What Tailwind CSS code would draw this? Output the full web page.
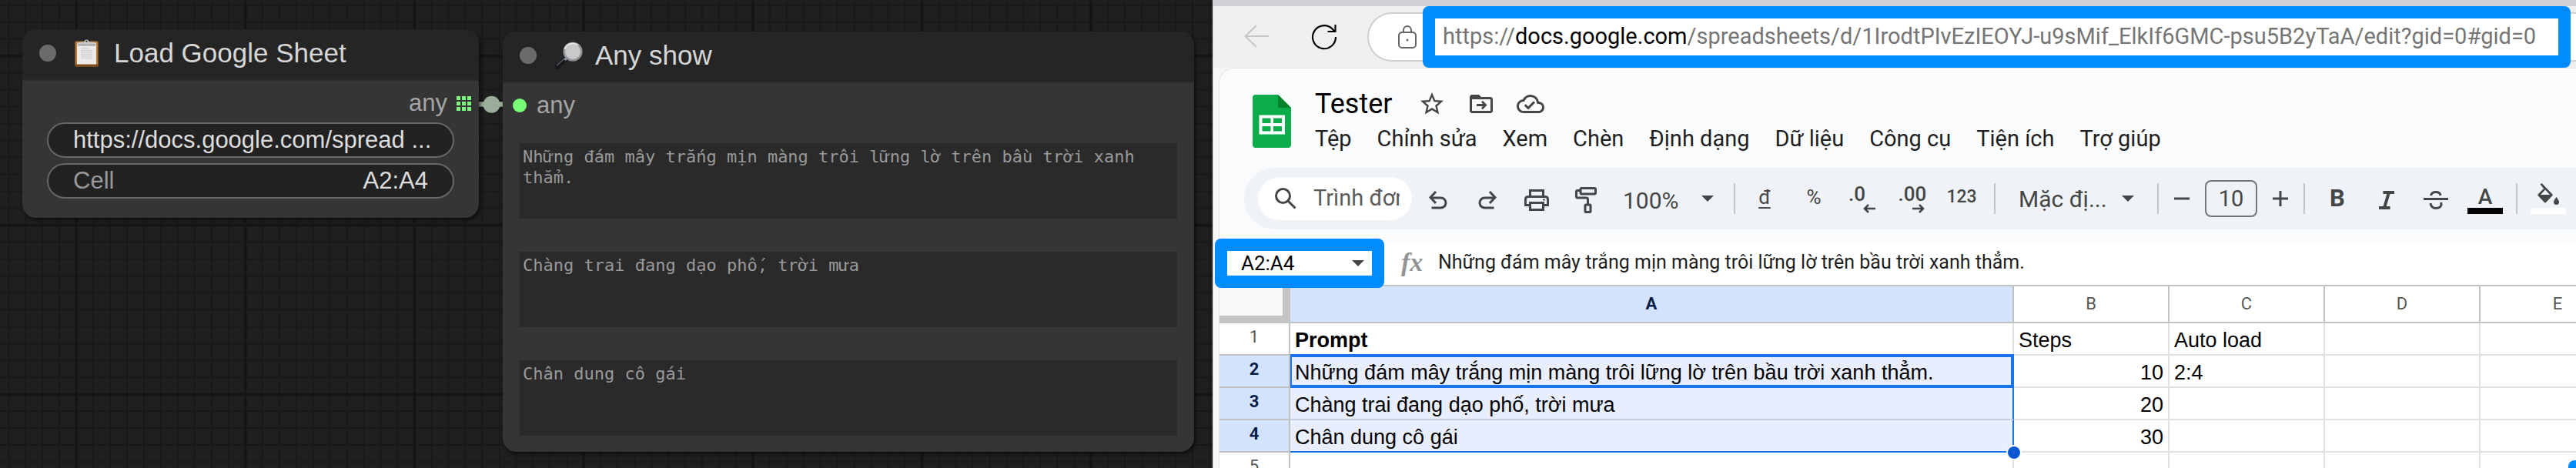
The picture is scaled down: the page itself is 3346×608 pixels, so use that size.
<!DOCTYPE html>
<html lang="vi">
<head>
<meta charset="utf-8">
<meta name="viewport" content="width=device-width, initial-scale=1">
<title>Load Google Sheet</title>
<script src="https://cdn.jsdelivr.net/npm/@tailwindcss/browser@4"></script>
</head>
<body class="grid h-screen grid-cols-[1575fr_1771fr] overflow-hidden bg-[#1f1f1f] font-['Liberation_Sans',Arial,sans-serif]">

<!-- Node canvas -->
<main class="relative overflow-hidden bg-[#1f1f1f]">
  <svg class="absolute inset-0 h-full w-full" aria-hidden="true">
    <defs>
      <pattern id="minor" width="21.97" height="21.97" x="10.2" y="5.8" patternUnits="userSpaceOnUse">
        <path d="M0 1H22M1 0V22" stroke="#191919" stroke-width="2"/>
      </pattern>
      <pattern id="major" width="219.7" height="219.7" x="97" y="71" patternUnits="userSpaceOnUse">
        <path d="M0 2H220M2 0V220" stroke="#141414" stroke-width="3.5"/>
      </pattern>
    </defs>
    <rect width="100%" height="100%" fill="url(#minor)"/>
    <rect width="100%" height="100%" fill="url(#major)"/>
    <path d="M620 135.5H656" stroke="#141414" stroke-width="12"/>
    <path d="M620 135.5H656" stroke="#9aac9a" stroke-width="6.5"/>
    <circle cx="638.500" cy="135.700" r="11" fill="#9aac9a"/>
  </svg>

  <section class="absolute top-[38px] left-[29px] w-[593px] overflow-hidden rounded-[18px] bg-[#353535] pb-[25px] shadow-[2px_3px_5px_rgba(0,0,0,0.6)]">
    <header class="flex h-[67px] items-center border-b-2 border-[#2b2b2b] bg-[#252525] pb-1 pl-[22px]">
      <span class="size-[22px] rounded-full bg-[#6b6b6b]"></span>
      <svg class="ml-6 h-9 w-[31px]" viewBox="0 0 31 36" aria-hidden="true">
        <rect x=".5" y="2.500" width="30" height="33" rx="1.500" fill="#b67a35"/>
        <rect x=".5" y="32.500" width="30" height="3" rx="1" fill="#7d4a1c"/>
        <rect x="3" y="6" width="25" height="26.500" fill="#ecebe9"/>
        <path d="M8 12H19M8 14.500H23M8 17H23M8 19.500H23M8 22H23M8 24.500H23" stroke="#d3d2d1" stroke-width="1.500"/>
        <path d="M3 6.800V4.800Q4 3.800 12.500 3.500Q12.500 .5 15.500 .5T18.500 3.500Q27 3.800 28 4.800V6.800Z" fill="#c9cbcf"/>
        <path d="M4 7.500H27" stroke="#65676b" stroke-width="1"/>
        <circle cx="15.500" cy="2.800" r="1.200" fill="#444"/>
      </svg>
      <h2 class="ml-5 text-[35px] leading-10 text-[#d6d6d6]">Load Google Sheet</h2>
    </header>
    <div class="mt-3 flex h-[34px] items-center justify-end gap-3 pr-[10px] text-[31px] text-[#a5a5a5]">
      any
      <svg class="size-[19px]" viewBox="0 0 19 19" fill="#7dfb7d" aria-hidden="true">
        <path d="M0 0h5v5H0zM7 0h5v5H7zM14 0h5v5h-5zM0 7h5v5H0zM7 7h5v5H7zM14 7h5v5h-5zM0 14h5v5H0zM7 14h5v5H7zM14 14h5v5h-5z"/>
      </svg>
    </div>
    <div class="mt-2 flex flex-col gap-[7px] px-8 text-[31px]">
      <input aria-label="URL" class="h-[46px] w-full rounded-full border-2 border-[#666] bg-[#222] pl-8 text-[#dddddd]" value="https://docs.google.com/spread ...">
      <label class="flex h-[46px] items-center rounded-full border-2 border-[#666] bg-[#222] px-8 text-[#999]">
        Cell
        <input class="min-w-0 flex-1 bg-transparent text-right text-[#dddddd]" value="A2:A4">
      </label>
    </div>
  </section>

  <section class="absolute top-[41px] left-[653px] w-[898px] overflow-hidden rounded-[18px] bg-[#353535] pb-[21px] shadow-[2px_3px_5px_rgba(0,0,0,0.6)]">
    <header class="flex h-[67px] items-center border-b-2 border-[#2b2b2b] bg-[#252525] pb-1 pl-[22px]">
      <span class="size-[22px] rounded-full bg-[#6b6b6b]"></span>
      <svg class="ml-6 size-9" viewBox="0 0 36 36" aria-hidden="true">
        <path d="M2.500 33.500L14 22.500" stroke="#17191c" stroke-width="6" stroke-linecap="round"/>
        <path d="M2.500 31L12 22" stroke="#5b6066" stroke-width="1.200" stroke-linecap="round"/>
        <path d="M12.500 24L16 20.500" stroke="#9a9da1" stroke-width="3"/>
        <circle cx="23" cy="13" r="11.300" fill="#c9c9c9" stroke="#8f9498" stroke-width="2.600"/>
        <path d="M12.500 10A11 11 0 0 1 30 5" fill="none" stroke="#e9ebee" stroke-width="1.600"/>
      </svg>
      <h2 class="ml-4 text-[35px] leading-10 text-[#d6d6d6]">Any show</h2>
    </header>
    <div class="mt-3 flex h-[34px] items-center gap-[13px] pl-[13px] text-[31px] text-[#a5a5a5]">
      <span class="size-[18px] rounded-full bg-[#77ff77]"></span>
      any
    </div>
    <div class="mt-8 flex flex-col gap-[43px] px-[22px] font-['DejaVu_Sans_Mono',monospace] text-[22px] leading-[27px] text-[#999]">
      <textarea aria-label="Dòng 1" class="block h-[98px] w-full resize-none overflow-hidden bg-[#2a2a2a] px-1 pt-1">Những đám mây trắng mịn màng trôi lững lờ trên bầu trời xanh thẳm.</textarea>
      <textarea aria-label="Dòng 2" class="block h-[98px] w-full resize-none overflow-hidden bg-[#2a2a2a] px-1 pt-1">Chàng trai đang dạo phố, trời mưa</textarea>
      <textarea aria-label="Dòng 3" class="block h-[98px] w-full resize-none overflow-hidden bg-[#2a2a2a] px-1 pt-1">Chân dung cô gái</textarea>
    </div>
  </section>
</main>

<!-- Browser window with the spreadsheet -->
<div class="relative flex min-w-0 flex-col overflow-hidden border-l border-[#d0d0d0] bg-[#f6f6f7] font-[Roboto,sans-serif]">
  <div class="h-2 shrink-0 bg-[#cfd1d4]"></div>
  <nav class="flex h-20 shrink-0 items-center bg-[#efefef] pl-10">
    <button aria-label="Quay lại" class="size-8">
      <svg viewBox="0 0 32 32" fill="none" stroke="#c6c6c6" stroke-width="2"><path d="M32 15H1M16 1L1.500 15L16 29"/></svg>
    </button>
    <button aria-label="Tải lại" class="ml-[55px] size-[34px]">
      <svg viewBox="0 0 34 34" fill="none" stroke="#000" stroke-width="2.200"><path d="M32 17A15 15 0 1 1 27.500 6.500L31 10M31.500 1V10H21.500"/></svg>
    </button>
    <div class="ml-[39px] flex h-16 min-w-0 flex-1 items-center rounded-l-full border-2 border-r-0 border-[#cfcfcf] bg-white pl-[38px]">
      <svg class="h-8 w-6 shrink-0" viewBox="0 0 24 32" fill="none" stroke="#666" stroke-width="2" aria-label="Bảo mật">
        <rect x="1" y="10" width="22" height="20" rx="4"/><path d="M7 10V7A5 5 0 0 1 17 7V10"/><circle cx="12" cy="20" r="1.500" fill="#666" stroke="none"/>
      </svg>
      <div class="relative ml-6 mr-[23px] flex h-12 min-w-0 flex-1 items-center bg-white pl-[10px]">
        <div role="textbox" aria-label="Địa chỉ" contenteditable="true" class="text-[29px] whitespace-nowrap text-[#757575]">https://<span class="text-black">docs.google.com</span>/spreadsheets/d/1IrodtPIvEzIEOYJ-u9sMif_ElkIf6GMC-psu5B2yTaA/edit?gid=0#gid=0</div>
        <span class="pointer-events-none absolute -inset-4 z-10 rounded-lg border-[16px] border-[#008cff]"></span>
      </div>
    </div>
  </nav>

  <div class="ml-[7px] flex flex-1 flex-col rounded-tl-[20px] border-t border-l border-[#e4e5e8] bg-[#f9fbfd]">
    <header class="flex items-center pt-6 pl-[43px]">
      <svg class="h-[69px] w-[50px]" viewBox="0 0 50 69" aria-label="Trang tính">
        <path d="M4 0H33L50 17V65Q50 69 46 69H4Q0 69 0 65V4Q0 0 4 0Z" fill="#0bad4b"/>
        <path d="M33 0L50 17H33Z" fill="#06822d"/>
        <path d="M8.500 26.500H42V51.500H8.500ZM12.500 30.500V37H23.500V30.500ZM27 30.500V37H38V30.500ZM12.500 41V47.500H23.500V41ZM27 41V47.500H38V41Z" fill="#fff" fill-rule="evenodd"/>
      </svg>
      <div class="ml-[31px] flex flex-col gap-1">
        <div class="flex h-11 items-center">
          <h1 class="text-[36px] leading-10 text-black">Tester</h1>
          <div class="ml-[34px] flex gap-7 text-[#444746]">
            <button aria-label="Gắn dấu sao" class="size-9"><svg viewBox="0 0 24 24" fill="currentColor"><path d="M22 9.240l-7.190-.62L12 2 9.190 8.630 2 9.240l5.460 4.730L5.820 21 12 17.270 18.180 21l-1.630-7.030L22 9.240zM12 15.400l-3.760 2.270 1-4.280-3.320-2.880 4.380-.38L12 6.100l1.710 4.040 4.380.38-3.320 2.880 1 4.280L12 15.400z"/></svg></button>
            <button aria-label="Di chuyển" class="size-9"><svg viewBox="0 0 24 24" fill="currentColor"><path fill-rule="evenodd" d="M20 6h-8l-2-2H4c-1.100 0-2 .9-2 2v12c0 1.100.9 2 2 2h16c1.100 0 2-.9 2-2V8c0-1.100-.9-2-2-2zm0 12H4V8h16v10zM12 10.500l1.300-1.300 3.700 3.800-3.700 3.800L12 15.500l1.400-1.500H8v-2h5.400z"/></svg></button>
            <button aria-label="Đã lưu" class="size-9"><svg viewBox="0 0 24 24" fill="currentColor"><path d="M19.350 10.040A7.490 7.490 0 0 0 12 4C9.110 4 6.600 5.640 5.350 8.040A5.994 5.994 0 0 0 0 14c0 3.310 2.690 6 6 6h13c2.760 0 5-2.240 5-5 0-2.640-2.050-4.780-4.650-4.960zM19 18H6c-2.210 0-4-1.790-4-4 0-2.050 1.530-3.760 3.560-3.970l1.070-.11.5-.95A5.469 5.469 0 0 1 12 6c2.620 0 4.880 1.860 5.390 4.430l.3 1.500 1.530.11A2.980 2.980 0 0 1 22 15c0 1.650-1.350 3-3 3zm-9-3.820l-2.090-2.090L6.500 13.500 10 17l6.010-6.010-1.410-1.410z"/></svg></button>
          </div>
        </div>
        <div class="flex h-10 items-center gap-[33px] text-[29px] text-[#1f1f1f]">
          <button>Tệp</button><button>Chỉnh sửa</button><button>Xem</button><button>Chèn</button><button>Định dạng</button><button>Dữ liệu</button><button>Công cụ</button><button>Tiện ích</button><button>Trợ giúp</button>
        </div>
      </div>
    </header>

    <div role="toolbar" class="mt-[17px] ml-8 flex h-20 shrink-0 items-center overflow-hidden rounded-l-full bg-[#eff2f7] pl-[18px] text-[29px] text-[#444746]">
      <label class="flex h-14 w-[200px] shrink-0 items-center rounded-full bg-white pr-4 pl-[22px]">
        <svg class="size-7 shrink-0" viewBox="0 0 28 28" fill="none" stroke="currentColor" stroke-width="3" aria-hidden="true"><circle cx="10.500" cy="10.500" r="9"/><path d="M17 17L26.500 26.500"/></svg>
        <input aria-label="Trình đơn" class="ml-[22px] min-w-0 flex-1 bg-transparent placeholder:text-[#5a5d5c]" placeholder="Trình đơn">
      </label>
      <button aria-label="Hoàn tác" class="ml-0.5 flex w-16 shrink-0 justify-center pt-1"><svg class="h-6 w-6" viewBox="0 0 24 24" fill="none" stroke="currentColor" stroke-width="3"><path d="M3.500 22H15.500A6.500 6.500 0 0 0 15.500 9H2M9 1L2 8.500L9 16"/></svg></button>
      <button aria-label="Làm lại" class="flex w-16 shrink-0 justify-center pt-1"><svg class="h-6 w-6" viewBox="0 0 24 24" fill="none" stroke="currentColor" stroke-width="3"><path d="M20.500 22H8.500A6.500 6.500 0 0 1 8.500 9H22M15 1L22 8.500L15 16"/></svg></button>
      <button aria-label="In" class="flex w-16 shrink-0 justify-center pt-1"><svg class="h-7 w-8" viewBox="0 0 32 28" fill="none" stroke="currentColor" stroke-width="3"><path d="M7.500 9V1.500H24.500V9M7 20.500H1.500V13Q1.500 9.500 5 9.500H27Q30.500 9.500 30.500 13V20.500H25"/><rect x="7.500" y="17.500" width="17" height="9"/><circle cx="25.500" cy="13.500" r="1.300" fill="currentColor" stroke="none"/></svg></button>
      <button aria-label="Sao chép định dạng" class="flex w-16 shrink-0 justify-center pt-1"><svg class="h-[34px] w-7" viewBox="0 0 28 34" fill="none" stroke="currentColor" stroke-width="3"><rect x="7" y="1.500" width="19.500" height="7.500" rx="1.500"/><path d="M7 4.500H3Q1.500 4.500 1.500 6V12Q1.500 14 3.500 14H14.500Q16.500 14 16.500 16V23"/><rect x="13" y="23" width="7" height="9.500" rx="1"/></svg></button>
      <label class="flex w-[160px] shrink-0 items-center pl-4">
        <select aria-label="Thu phóng" class="w-[94px] appearance-none bg-transparent pt-1 text-[30px]"><option>100%</option></select>
        <svg class="ml-2 h-2 w-4" viewBox="0 0 16 8" fill="currentColor"><path d="M0 0H16L8 8Z"/></svg>
      </label>
      <span class="mr-[6px] h-10 w-0.5 shrink-0 bg-[#c4c7c5]"></span>
      <button class="w-16 shrink-0 pb-1 text-[26px] underline underline-offset-4">đ</button>
      <button class="w-16 shrink-0 pb-1 text-[26px]">%</button>
      <button aria-label="Giảm số thập phân" class="flex w-16 shrink-0 flex-col items-center">
        <span class="h-[26px] pr-4 text-[26px] leading-[26px] font-medium">.0</span>
        <svg class="ml-4 h-3 w-4" viewBox="0 0 16 12" fill="none" stroke="currentColor" stroke-width="2.600"><path d="M16 6H2M7 1L2 6L7 11"/></svg>
      </button>
      <button aria-label="Tăng số thập phân" class="flex w-16 shrink-0 flex-col items-center">
        <span class="h-[26px] text-[26px] leading-[26px] font-medium">.00</span>
        <svg class="ml-4 h-3 w-4" viewBox="0 0 16 12" fill="none" stroke="currentColor" stroke-width="2.600"><path d="M0 6H14M9 1L14 6L9 11"/></svg>
      </button>
      <button class="w-16 shrink-0 pb-1 text-[23px] font-medium">123</button>
      <span class="ml-[10px] h-10 w-0.5 shrink-0 bg-[#c4c7c5]"></span>
      <label class="flex w-[210px] shrink-0 items-center pl-[30px]">
        <select aria-label="Phông chữ" class="w-[126px] appearance-none bg-transparent text-[30px]"><option>Mặc đị...</option></select>
        <svg class="ml-2 h-2 w-4" viewBox="0 0 16 8" fill="currentColor"><path d="M0 0H16L8 8Z"/></svg>
      </label>
      <span class="h-10 w-0.5 shrink-0 bg-[#c4c7c5]"></span>
      <button aria-label="Giảm cỡ chữ" class="ml-[10px] flex w-10 shrink-0 justify-center"><svg class="size-5" viewBox="0 0 20 20" stroke="currentColor" stroke-width="3"><path d="M0 10H20"/></svg></button>
      <input aria-label="Cỡ chữ" class="mx-[10px] h-12 w-[68px] shrink-0 rounded-lg border-2 border-[#747775] bg-transparent text-center" value="10">
      <button aria-label="Tăng cỡ chữ" class="flex w-10 shrink-0 justify-center"><svg class="size-5" viewBox="0 0 20 20" stroke="currentColor" stroke-width="3"><path d="M0 10H20M10 0V20"/></svg></button>
      <span class="mx-[10px] h-10 w-0.5 shrink-0 bg-[#c4c7c5]"></span>
      <button class="w-16 shrink-0 text-[31px] font-bold">B</button>
      <button aria-label="Nghiêng" class="flex w-16 shrink-0 justify-center pt-1"><svg class="h-6 w-5" viewBox="0 0 20 24" fill="none" stroke="currentColor" stroke-width="4"><path d="M5.500 2H20M0 22H14.500M13 2L7 22"/></svg></button>
      <button aria-label="Gạch ngang" class="flex w-16 shrink-0 justify-center pt-1"><svg class="h-6 w-8" viewBox="0 0 32 24" fill="none" stroke="currentColor" stroke-width="3"><path d="M0 10.500H32M9.500 6Q10.500 1.500 16 1.500T22 6M9 16Q10 22.500 16 22.500T23 18Q23 16.500 22.500 15"/></svg></button>
      <button aria-label="Màu chữ" class="flex w-16 shrink-0 flex-col items-center pt-1">
        <span class="text-[28px] leading-7 font-medium">A</span><span class="h-2 w-[46px] bg-black"></span>
      </button>
      <span class="mx-2 h-10 w-0.5 shrink-0 bg-[#c4c7c5]"></span>
      <button aria-label="Màu nền" class="flex w-16 shrink-0 flex-col items-center gap-1">
        <svg class="size-7" viewBox="0 0 28 28" fill="currentColor"><path fill-rule="evenodd" d="M3.500 1.500L5.500 0L19.500 14.500Q20 15.300 19.500 16L11 25Q10 25.800 9 25L.5 16Q0 15.300 .5 14.500L8 7ZM10 8.500L4 15H16Z"/><path d="M24.500 18Q28 22.500 28 24.500A3.500 3.500 0 0 1 21 24.500Q21 22.500 24.500 18Z"/></svg>
        <span class="h-2 w-[46px] bg-white"></span>
      </button>
    </div>

    <div class="mt-4 flex h-14 shrink-0 items-center bg-white text-[25px]">
      <label class="relative ml-[10px] flex h-8 w-[188px] shrink-0 items-center bg-white pl-[18px] text-[26px] text-black">
        <select aria-label="Hộp tên" class="w-[136px] appearance-none bg-transparent"><option>A2:A4</option></select>
        <svg class="ml-2 h-2 w-4" viewBox="0 0 16 8" fill="#444746"><path d="M0 0H16L8 8Z"/></svg>
        <span class="pointer-events-none absolute -inset-4 z-10 rounded-lg border-[16px] border-[#008cff]"></span>
      </label>
      <span class="w-[86px] pb-1 pl-[38px] font-['Liberation_Serif',serif] text-[34px] font-bold text-[#949494] italic" aria-hidden="true">fx</span>
      <input aria-label="Công thức" class="min-w-0 flex-1 bg-transparent pb-0.5 text-[#1f1f1f]" value="Những đám mây trắng mịn màng trôi lững lờ trên bầu trời xanh thẳm.">
    </div>

    <table class="w-[1840px] table-fixed border-separate border-spacing-0 bg-white font-['Liberation_Sans',Arial,sans-serif] text-[27px] leading-8 text-black">
      <colgroup><col class="w-[92px]"><col class="w-[940px]"><col class="w-[202px]"><col class="w-[202px]"><col class="w-[202px]"><col class="w-[202px]"></colgroup>
      <thead class="font-[Roboto,sans-serif] text-[22px] text-[#575757]">
        <tr class="h-[50px]">
          <td class="border-t-2 border-r-[10px] border-b-[10px] border-[#c4c4c4] bg-[#f8f9fa]"></td>
          <th scope="col" class="border-y-2 border-r-2 border-[#c0c3c2] bg-[#d3e3fd] font-bold text-[#041e49]">A</th>
          <th scope="col" class="border-y-2 border-r-2 border-[#c0c3c2] font-normal">B</th>
          <th scope="col" class="border-y-2 border-r-2 border-[#c0c3c2] font-normal">C</th>
          <th scope="col" class="border-y-2 border-r-2 border-[#c0c3c2] font-normal">D</th>
          <th scope="col" class="border-y-2 border-r-2 border-[#c0c3c2] font-normal">E</th>
        </tr>
      </thead>
      <tbody class="[&_td]:pt-1">
        <tr class="h-[42px]">
          <th scope="row" class="border-r-2 border-b-2 border-[#c0c3c2] pb-1 font-[Roboto,sans-serif] text-[22px] font-normal text-[#575757]">1</th>
          <td class="border-r-2 border-b-2 border-[#e1e1e1] pl-[6px] font-bold">Prompt</td>
          <td class="border-r-2 border-b-2 border-[#e1e1e1] pl-[6px]">Steps</td>
          <td class="border-r-2 border-b-2 border-[#e1e1e1] pl-[6px]">Auto load</td>
          <td class="border-r-2 border-b-2 border-[#e1e1e1]"></td>
          <td class="border-r-2 border-b-2 border-[#e1e1e1]"></td>
        </tr>
        <tr class="h-[42px]">
          <th scope="row" class="border-r-2 border-b-2 border-[#c0c3c2] bg-[#d3e3fd] pb-1 font-[Roboto,sans-serif] text-[22px] font-bold text-[#041e49]">2</th>
          <td class="relative border-r-2 border-b-2 border-[#e1e1e1] bg-[#e8eefd] pl-[6px]">Những đám mây trắng mịn màng trôi lững lờ trên bầu trời xanh thẳm.<span class="absolute -top-0.5 -right-0.5 -bottom-0.5 left-0 border-4 border-l-2 border-[#1a73e8]"></span></td>
          <td class="border-r-2 border-b-2 border-[#e1e1e1] pr-[6px] text-right">10</td>
          <td class="border-r-2 border-b-2 border-[#e1e1e1] pl-[6px]">2:4</td>
          <td class="border-r-2 border-b-2 border-[#e1e1e1]"></td>
          <td class="border-r-2 border-b-2 border-[#e1e1e1]"></td>
        </tr>
        <tr class="h-[42px]">
          <th scope="row" class="border-r-2 border-b-2 border-[#c0c3c2] bg-[#d3e3fd] pb-1 font-[Roboto,sans-serif] text-[22px] font-bold text-[#041e49]">3</th>
          <td class="border-r-2 border-b-2 border-r-[#1a73e8] border-b-[#c9cfde] bg-[#e8eefd] pl-[6px]">Chàng trai đang dạo phố, trời mưa</td>
          <td class="border-r-2 border-b-2 border-[#e1e1e1] pr-[6px] text-right">20</td>
          <td class="border-r-2 border-b-2 border-[#e1e1e1]"></td>
          <td class="border-r-2 border-b-2 border-[#e1e1e1]"></td>
          <td class="border-r-2 border-b-2 border-[#e1e1e1]"></td>
        </tr>
        <tr class="h-[42px]">
          <th scope="row" class="border-r-2 border-b-2 border-[#c0c3c2] bg-[#d3e3fd] pb-1 font-[Roboto,sans-serif] text-[22px] font-bold text-[#041e49]">4</th>
          <td class="relative border-r-2 border-b-2 border-[#1a73e8] bg-[#e8eefd] pl-[6px]">Chân dung cô gái<span class="absolute -right-3 -bottom-3 z-10 size-5 rounded-full border-2 border-white bg-[#0b57d0]"></span></td>
          <td class="border-r-2 border-b-2 border-[#e1e1e1] pr-[6px] text-right">30</td>
          <td class="border-r-2 border-b-2 border-[#e1e1e1]"></td>
          <td class="border-r-2 border-b-2 border-[#e1e1e1]"></td>
          <td class="border-r-2 border-b-2 border-[#e1e1e1]"></td>
        </tr>
        <tr class="h-[42px]">
          <th scope="row" class="border-r-2 border-b-2 border-[#c0c3c2] pb-1 font-[Roboto,sans-serif] text-[22px] font-normal text-[#575757]">5</th>
          <td class="border-r-2 border-b-2 border-[#e1e1e1]"></td>
          <td class="border-r-2 border-b-2 border-[#e1e1e1]"></td>
          <td class="border-r-2 border-b-2 border-[#e1e1e1]"></td>
          <td class="border-r-2 border-b-2 border-[#e1e1e1]"></td>
          <td class="border-r-2 border-b-2 border-[#e1e1e1]"></td>
        </tr>
      </tbody>
    </table>
  </div>
  <span class="absolute right-0 bottom-0 h-[10px] w-[10px] rounded-tl-lg bg-[#008cff]"></span>
</div>
</body>
</html>
